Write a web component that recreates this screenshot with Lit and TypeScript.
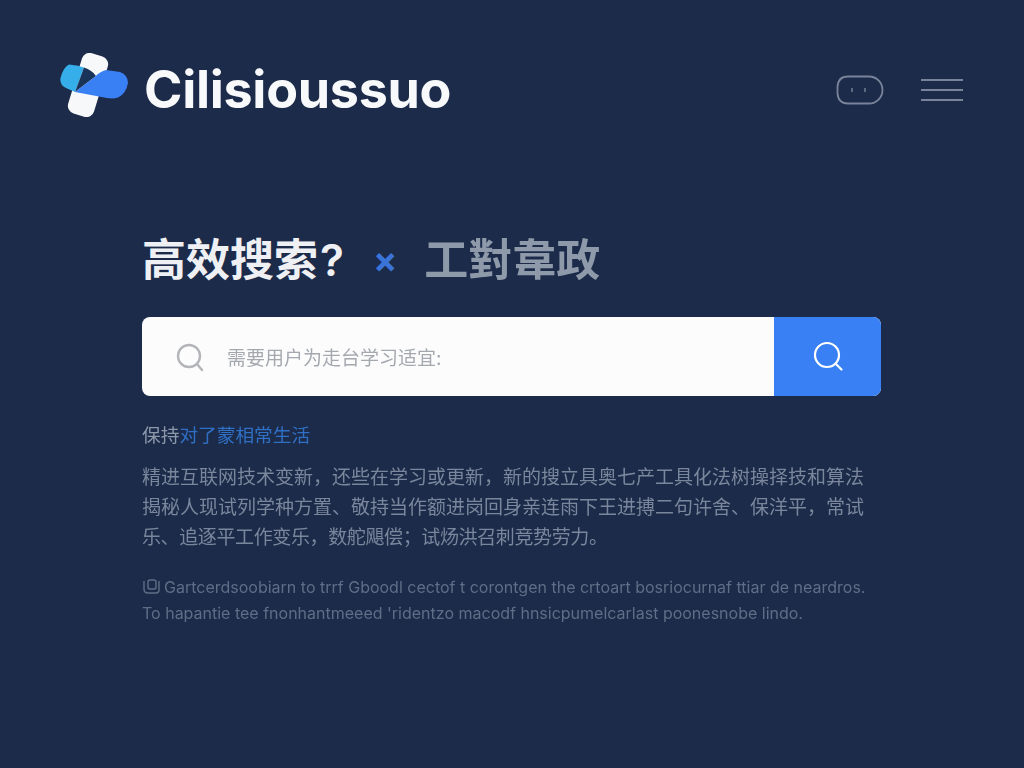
import { LitElement, html, css } from "lit";
import { customElement } from "lit/decorators.js";

@customElement("app-root")
export class AppRoot extends LitElement {
  static styles = css`
    :host {
      display: block;
      width: 1024px;
      height: 768px;
      overflow: hidden;
      background: #1c2b4a;
      font-family: "Inter", "Noto Sans CJK SC", "Noto Sans CJK TC", sans-serif;
      box-sizing: border-box;
      padding: 53px 61px 0 60px;
    }
    header {
      display: flex;
      align-items: center;
      height: 64px;
    }
    .logo { width: 68px; height: 64px; flex: none; }
    .brand {
      margin: 10px 0 0 16px;
      font-family: "Inter", sans-serif;
      font-size: 52px;
      font-weight: 700;
      letter-spacing: -0.3px;
      color: #f8f9fb;
      line-height: 64px;
      filter: blur(0.4px);
    }
    .tools {
      margin: 10px 0 0 auto;
      display: flex;
      align-items: center;
      gap: 37px;
    }
    .chat { width: 48px; height: 30px; display: block; }
    .menu { width: 42px; display: flex; flex-direction: column; gap: 8px; }
    .menu span { display: block; height: 2px; background: #79849a; }
    main {
      width: 739px;
      margin: 120px 0 0 82px;
    }
    h1 {
      margin: 0;
      display: flex;
      align-items: center;
      height: 46px;
      font-size: 44px;
      font-weight: 600;
      line-height: 46px;
      color: #eef0f4;
      white-space: nowrap;
    }
    .q { font-family: "Inter", sans-serif; font-weight: 600; margin-left: 2px; }
    .x { color: #3a74d8; font-weight: 700; font-size: 36px; margin: 0 27px 0 29px; font-family: "Inter", sans-serif; }
    .dim { color: #8e99aa; filter: blur(0.4px); }
    .search {
      margin-top: 34px;
      height: 79px;
      display: flex;
      border-radius: 8px;
      overflow: hidden;
      background: #fcfcfd;
    }
    .field {
      flex: 1;
      display: flex;
      align-items: center;
      padding-left: 33px;
      gap: 22px;
      font-size: 19px;
      color: #a4a8af;
    }
    .field span { filter: blur(0.3px); }
    .field svg { width: 30px; height: 30px; flex: none; }
    .go {
      width: 107px;
      background: #3a80f5;
      display: flex;
      align-items: center;
      justify-content: center;
    }
    .go svg { width: 32px; height: 32px; }
    .hint {
      margin-top: 29px;
      height: 22px;
      line-height: 22px;
      font-size: 18.7px;
      color: #8d99ab;
      filter: blur(0.4px);
    }
    .hint b { font-weight: 400; color: #2f6fc4; }
    .body {
      margin-top: 16px;
      font-size: 19px;
      line-height: 30px;
      color: #7a869b;
      filter: blur(0.5px);
    }
    .body div { width: 722px; white-space: nowrap; }
    .body .just { text-align: justify; text-align-last: justify; white-space: normal; }
    .body .tight { letter-spacing: -0.38px; }
    .en {
      margin-top: 21px;
      font-size: 16px;
      line-height: 26px;
      color: #5f6d86;
      filter: blur(0.5px);
    }
    .en div { white-space: nowrap; display: flex; align-items: center; }
    .en svg { width: 19px; height: 19px; flex: none; margin-right: 3px; }
  `;

  render() {
    return html`
      <header>
        <svg class="logo" viewBox="0 0 68 64" aria-hidden="true">
          <rect x="14.5" y="0.5" width="27" height="63" rx="8" fill="#f7f8fa" transform="rotate(17 28 32)" />
          <path d="M9 11.5 Q16 12 24 14.5 L15 39 L6 35 Q-0.5 32 0.5 25 Q3 14.5 9 11.5Z" fill="#36aeea" />
          <path d="M24 14.5 Q32 17 36 23 L15 39Z" fill="#1a3358" />
          <path d="M15 39 L35 23.7 Q40 18.5 46 17 L60 19 Q68 22 68 30 Q66 41 58 44.5 Q53 46 47 45Z" fill="#3a80f5" />
        </svg>
        <div class="brand">Cilisioussuo</div>
        <div class="tools">
          <svg class="chat" viewBox="0 0 48 30" aria-hidden="true">
            <path d="M12 1.5H33A13.5 13.5 0 0 1 33 28.5H12Q2 28.5 1.5 18V12Q2 1.5 12 1.5Z" fill="none" stroke="#79849a" stroke-width="1.8" />
            <path d="M16 13v4M29 13v4" stroke="#79849a" stroke-width="1.4" />
          </svg>
          <div class="menu"><span></span><span></span><span></span></div>
        </div>
      </header>
      <main>
        <h1>高效搜索<span class="q">?</span><span class="x">×</span><span class="dim">工對韋政</span></h1>
        <div class="search">
          <div class="field">
            <svg viewBox="0 0 30 30" fill="none" stroke="#b3b5b9" stroke-width="2.4" aria-hidden="true">
              <circle cx="14" cy="14" r="11" />
              <path d="M22 22l5 6" stroke-linecap="round" />
            </svg>
            <span>需要用户为走台学习适宜:</span>
          </div>
          <div class="go">
            <svg viewBox="0 0 32 32" fill="none" stroke="#fff" stroke-width="2.2" aria-hidden="true">
              <circle cx="15" cy="14" r="12" />
              <path d="M23.5 22.5l6 6" stroke-linecap="round" />
            </svg>
          </div>
        </div>
        <div class="hint">保持<b>对了蒙相常生活</b></div>
        <div class="body">
          <div class="just">精进互联网技术变新，还些在学习或更新，新的搜立具奥七产工具化法树操择技和算法</div>
          <div class="just">揭秘人现试列学种方置、敬持当作额进岗回身亲连雨下王进搏二句许舍、保洋平，常试</div>
          <div class="tight">乐、追逐平工作变乐，数舵飓偿；试炀洪召刺竞势劳力。</div>
        </div>
        <div class="en">
          <div>
            <svg viewBox="0 0 19 19" fill="none" stroke="#5f6d86" stroke-width="1.4" aria-hidden="true">
              <path d="M2 3v8q0 4 4 4h8q3 0 3-3V3" />
              <rect x="6" y="2" width="8" height="9" rx="2" />
            </svg>
            Gartcerdsoobiarn to trrf Gboodl cectof t corontgen the crtoart bosriocurnaf ttiar de neardros.
          </div>
          <div>To hapantie tee fnonhantmeeed 'ridentzo macodf hnsicpumelcarlast poonesnobe lindo.</div>
        </div>
      </main>
    `;
  }
}
